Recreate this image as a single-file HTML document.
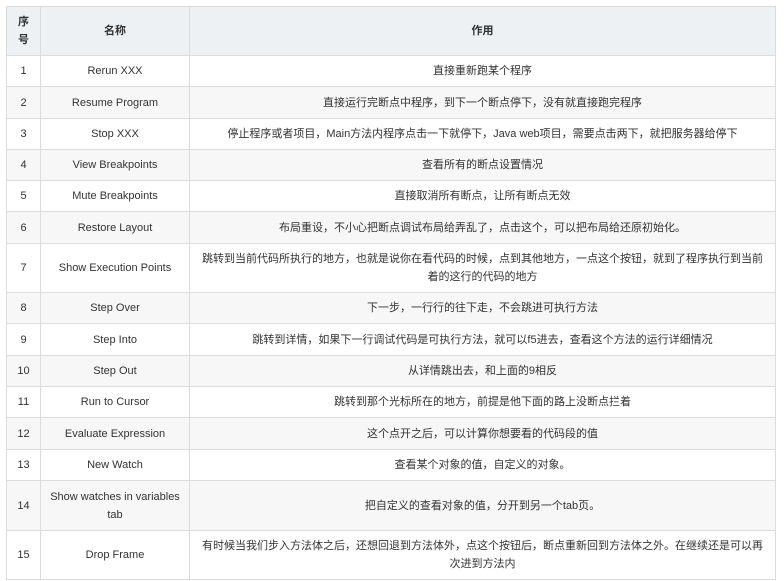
<!DOCTYPE html>
<html><head><meta charset="utf-8"><style>
html,body{margin:0;padding:0;background:#fff;width:784px;height:581px;overflow:hidden}
table{position:absolute;left:6px;top:6px;border-collapse:collapse;width:770px;table-layout:fixed;font-family:"Liberation Sans","Noto Sans CJK SC",sans-serif;font-size:11px;color:#333}
td,th{border:1px solid #dcdcdc;text-align:center;padding:0 4px;line-height:18px;box-sizing:border-box}
td:nth-child(3){padding:0 9px}
th{background:#eef1f4;font-weight:bold;height:49px}
tr:nth-child(odd) td{background:#f7f7f7}
</style></head><body>
<table>
<colgroup><col style="width:34px"><col style="width:149px"><col></colgroup>
<tr><th>序<br>号</th><th>名称</th><th>作用</th></tr>
<tr style="height:31px"><td>1</td><td>Rerun XXX</td><td>直接重新跑某个程序</td></tr>
<tr style="height:32px"><td>2</td><td>Resume Program</td><td>直接运行完断点中程序，到下一个断点停下，没有就直接跑完程序</td></tr>
<tr style="height:31px"><td>3</td><td>Stop XXX</td><td>停止程序或者项目，Main方法内程序点击一下就停下，Java web项目，需要点击两下，就把服务器给停下</td></tr>
<tr style="height:31px"><td>4</td><td>View Breakpoints</td><td>查看所有的断点设置情况</td></tr>
<tr style="height:31px"><td>5</td><td>Mute Breakpoints</td><td>直接取消所有断点，让所有断点无效</td></tr>
<tr style="height:32px"><td>6</td><td>Restore Layout</td><td>布局重设，不小心把断点调试布局给弄乱了，点击这个，可以把布局给还原初始化。</td></tr>
<tr style="height:49px"><td>7</td><td>Show Execution Points</td><td>跳转到当前代码所执行的地方，也就是说你在看代码的时候，点到其他地方，一点这个按钮，就到了程序执行到当前着的这行的代码的地方</td></tr>
<tr style="height:31px"><td>8</td><td>Step Over</td><td>下一步，一行行的往下走，不会跳进可执行方法</td></tr>
<tr style="height:32px"><td>9</td><td>Step Into</td><td>跳转到详情，如果下一行调试代码是可执行方法，就可以f5进去，查看这个方法的运行详细情况</td></tr>
<tr style="height:31px"><td>10</td><td>Step Out</td><td>从详情跳出去，和上面的9相反</td></tr>
<tr style="height:31px"><td>11</td><td>Run to Cursor</td><td>跳转到那个光标所在的地方，前提是他下面的路上没断点拦着</td></tr>
<tr style="height:32px"><td>12</td><td>Evaluate Expression</td><td>这个点开之后，可以计算你想要看的代码段的值</td></tr>
<tr style="height:31px"><td>13</td><td>New Watch</td><td>查看某个对象的值，自定义的对象。</td></tr>
<tr style="height:50px"><td>14</td><td>Show watches in variables tab</td><td>把自定义的查看对象的值，分开到另一个tab页。</td></tr>
<tr style="height:49px"><td>15</td><td>Drop Frame</td><td>有时候当我们步入方法体之后，还想回退到方法体外，点这个按钮后，断点重新回到方法体之外。在继续还是可以再次进到方法内</td></tr>
</table>
</body></html>
